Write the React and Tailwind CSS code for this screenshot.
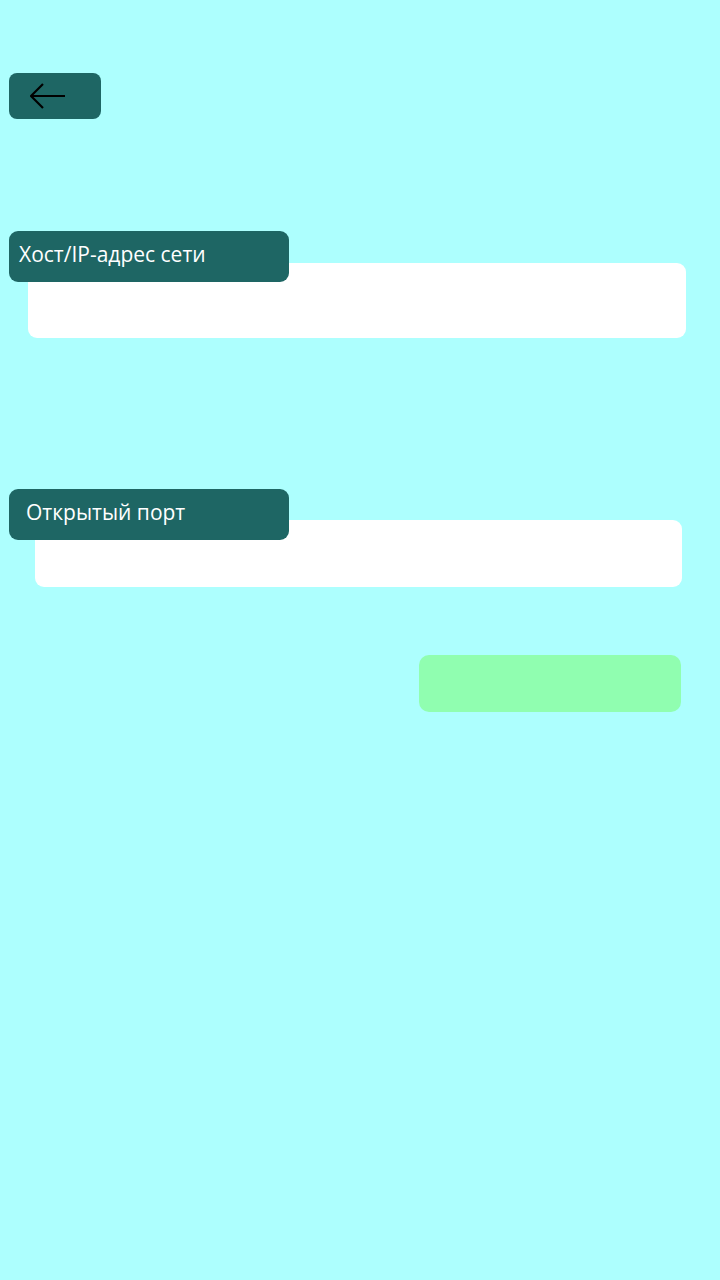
import React from 'react';

function FieldLabel({ children, textPad }) {
  return (
    <div className={`relative z-10 flex h-[51px] w-[280px] items-center rounded-[9px] bg-[#1e6664] pb-[3px] text-[21px] text-white ${textPad}`}>
      {children}
    </div>
  );
}

export default function App() {
  return (
    <div
      className="min-h-screen w-full bg-[#adfffe]"
      style={{ fontFamily: '"Open Sans", "Noto Sans", sans-serif' }}
    >
      <div className="flex flex-col pt-[73px]">
        <button
          type="button"
          className="ml-[9px] flex h-[46px] w-[92px] items-center rounded-[8px] bg-[#1e6664] pl-[21px]"
        >
          <svg width="36" height="26" viewBox="0 0 36 26" fill="none" stroke="#000" strokeWidth="2.2">
            <path d="M1 13 H35" />
            <path d="M13 1 L1 13 L13 25" />
          </svg>
        </button>

        <div className="ml-[9px] mt-[112px]">
          <FieldLabel textPad="pl-[10px]">Хост/IP-адрес сети</FieldLabel>
        </div>
        <input
          type="text"
          className="ml-[28px] -mt-[19px] h-[75px] w-[658px] rounded-[9px] bg-white outline-none"
        />

        <div className="ml-[9px] mt-[151px]">
          <FieldLabel textPad="pl-[17px]">Открытый порт</FieldLabel>
        </div>
        <input
          type="text"
          className="ml-[35px] -mt-[20px] h-[67px] w-[647px] rounded-[9px] bg-white outline-none"
        />

        <button
          type="button"
          className="ml-[419px] mt-[68px] h-[57px] w-[262px] rounded-[10px] bg-[#90feb0]"
        />
      </div>
    </div>
  );
}
